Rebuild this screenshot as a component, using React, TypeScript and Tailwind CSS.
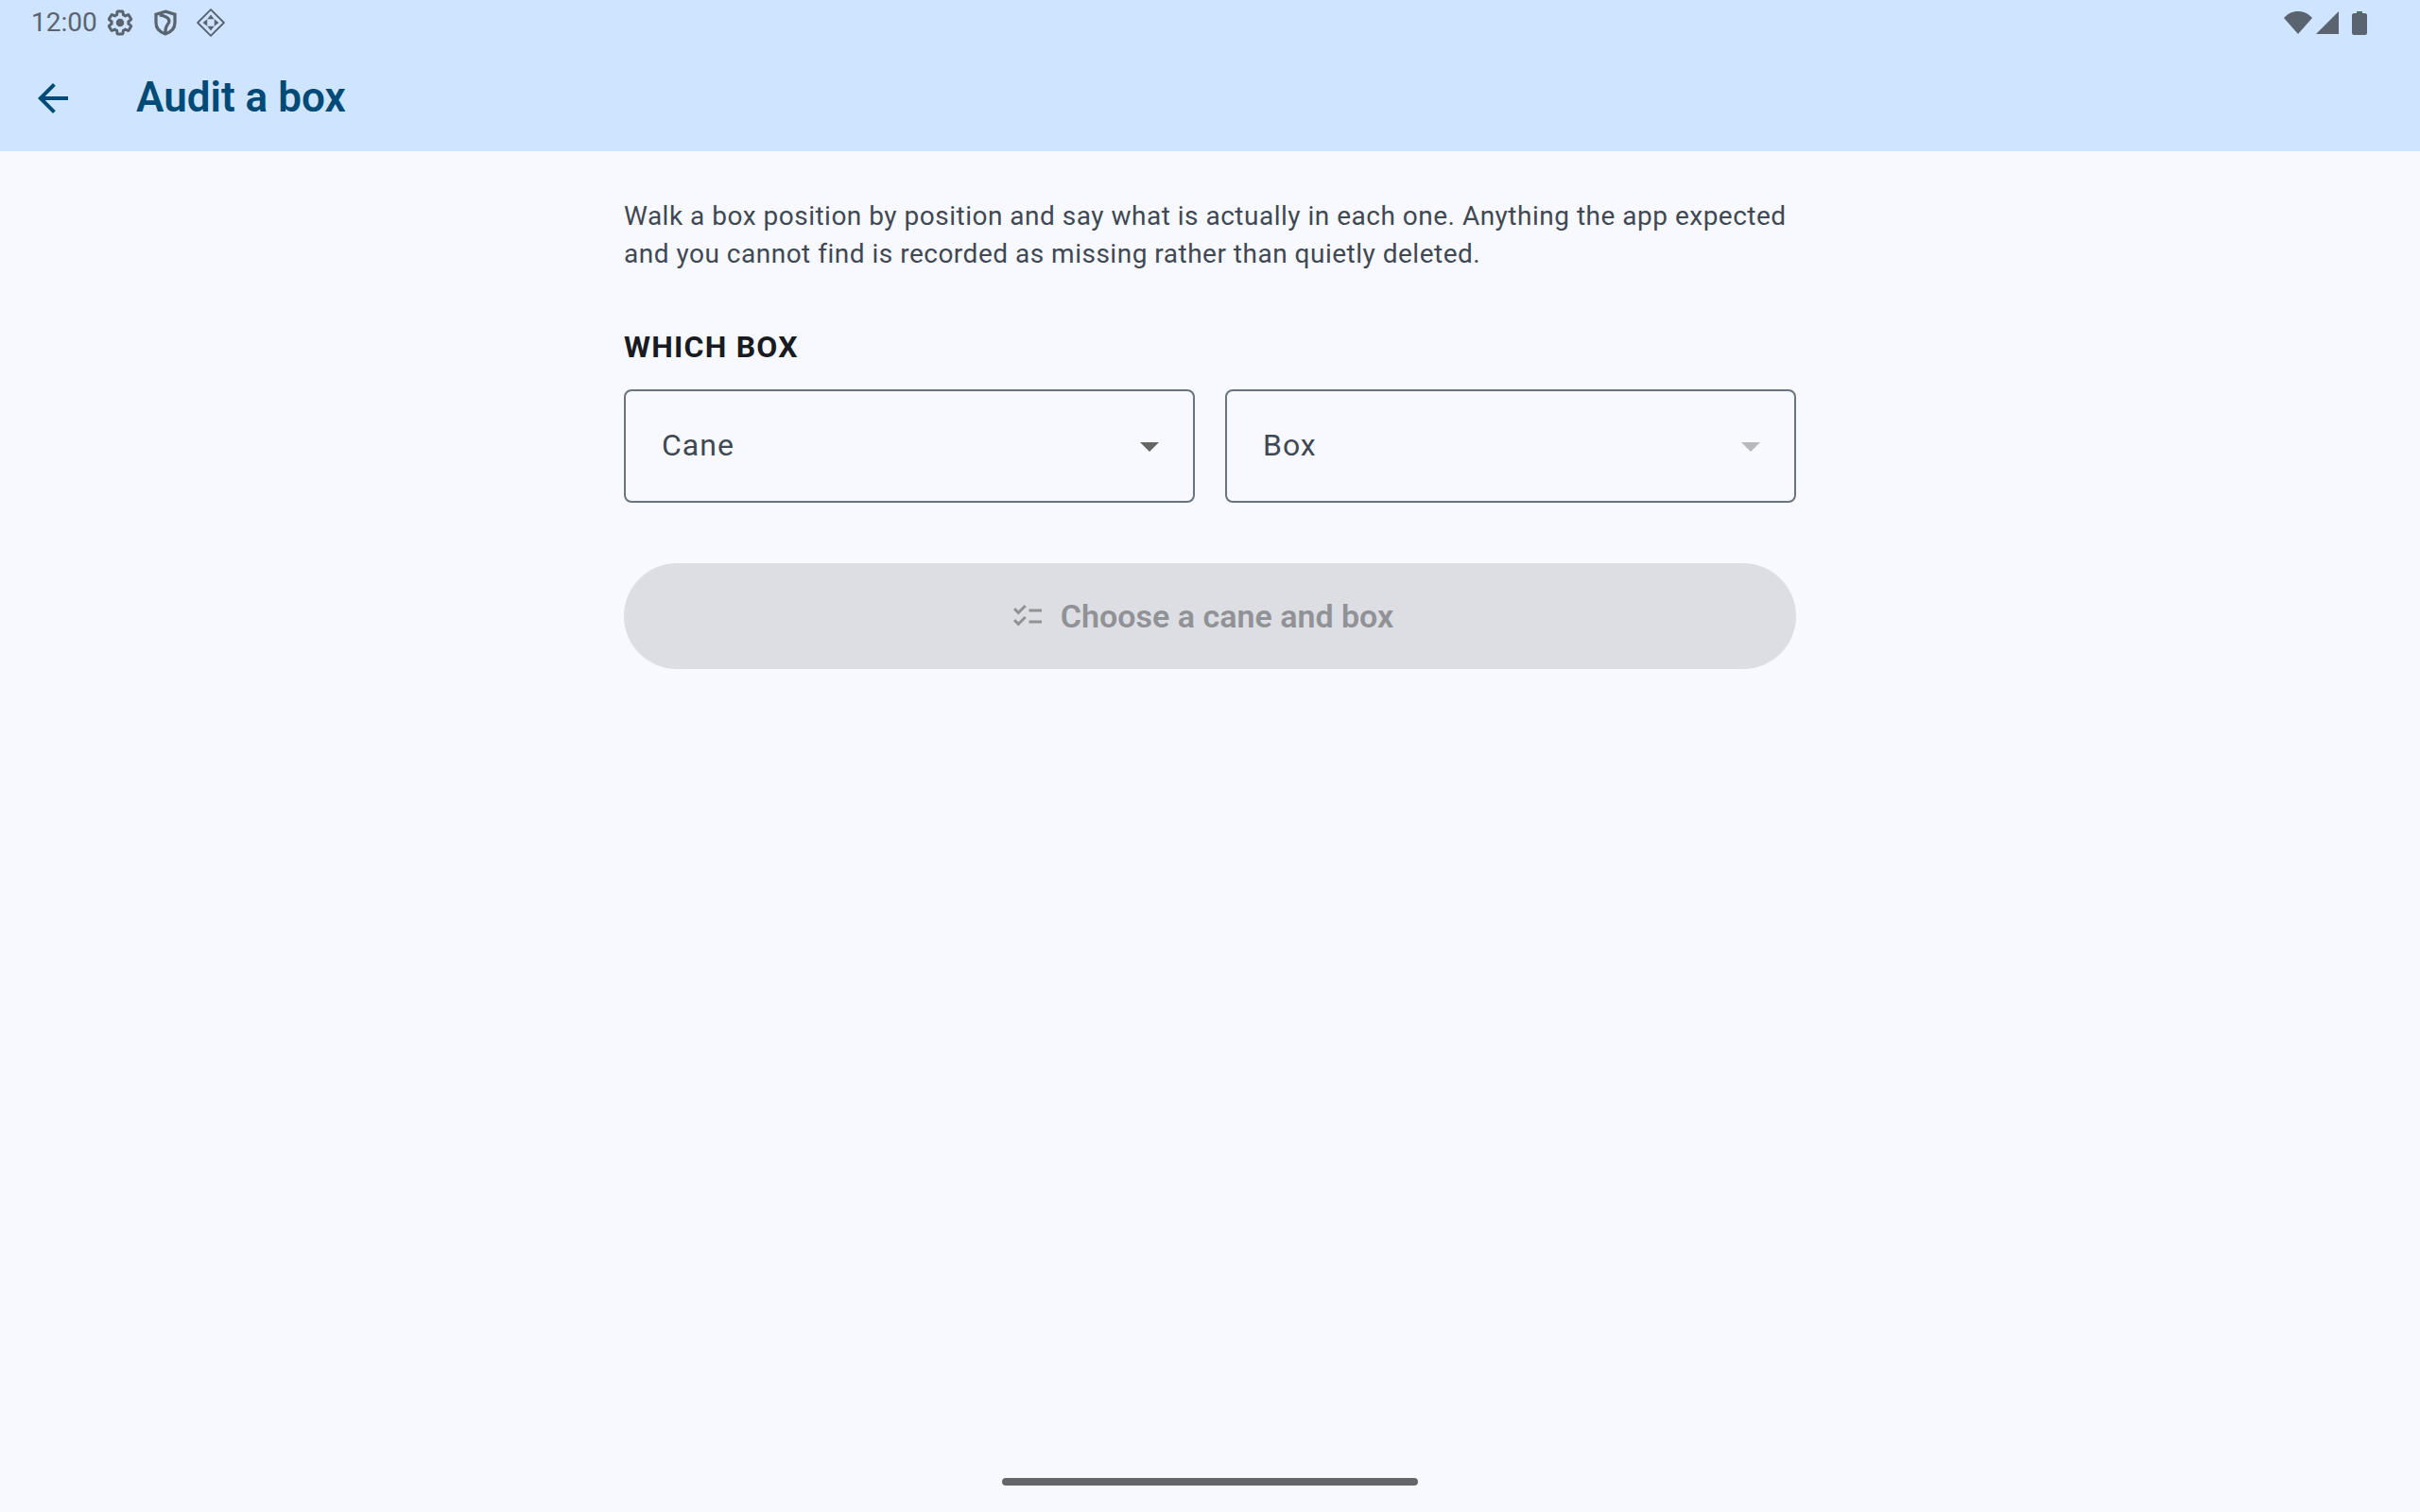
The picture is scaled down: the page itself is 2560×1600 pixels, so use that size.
import React from "react";

const GEAR =
  "M19.14 12.94c.04-.3.06-.61.06-.94 0-.32-.02-.64-.07-.94l2.03-1.58c.18-.14.23-.41.12-.61l-1.92-3.32c-.12-.22-.37-.29-.59-.22l-2.39.96c-.5-.38-1.03-.7-1.62-.94l-.36-2.54c-.04-.24-.24-.41-.48-.41h-3.84c-.24 0-.43.17-.47.41l-.36 2.54c-.59.24-1.13.57-1.62.94l-2.39-.96c-.22-.08-.47 0-.59.22L2.74 8.87c-.12.21-.08.47.12.61l2.03 1.58c-.05.3-.09.63-.09.94s.02.64.07.94l-2.03 1.58c-.18.14-.23.41-.12.61l1.92 3.32c.12.22.37.29.59.22l2.39-.96c.5.38 1.03.7 1.62.94l.36 2.54c.05.24.24.41.48.41h3.84c.24 0 .44-.17.47-.41l.36-2.54c.59-.24 1.13-.56 1.62-.94l2.39.96c.22.08.47 0 .59-.22l1.92-3.32c.12-.22.07-.47-.12-.61l-2.01-1.58z";

const StatusBar: React.FC = () => (
  <div className="h-[48px] flex items-center justify-between pl-[33px] pr-[56px] text-[#5a6470]">
    <div className="flex items-center">
      <span className="text-[28px] leading-[46px] w-[79px]">12:00</span>
      <svg className="w-[30px] h-[30px]" viewBox="0 0 24 24" fill="none" stroke="currentColor" strokeWidth="2.4">
        <path d={GEAR} />
        <circle cx="12" cy="12" r="3.4" fill="currentColor" stroke="none" />
      </svg>
      <svg className="w-[30px] h-[30px] ml-[18px]" viewBox="0 0 24 24" fill="none" stroke="currentColor" strokeWidth="2.6">
        <path d="M12 2.5 20 5v7c0 4.500-3.200 8-8 9.500-4.800-1.500-8-5-8-9.500V5z" />
        <path d="M7 5.500c4 .5 9 2.500 8 6-.8 2.500-3.500 3-3 9" />
      </svg>
      <svg className="w-[32px] h-[32px] ml-[17px]" viewBox="0 0 30 30" fill="none" stroke="currentColor" strokeWidth="1.800">
        <path d="M15 2 28 15 15 28 2 15z" strokeLinejoin="round" />
        <path d="M15 7l3.500 4.500h-7zM15 23l-3.500-4.500h7zM7 15l4.500-3.500v7zM23 15l-4.500 3.500v-7z" fill="currentColor" stroke="none" />
      </svg>
    </div>
    <div className="flex items-center">
      <svg className="w-[30px] h-[26px]" viewBox="0 0 30 26" fill="currentColor">
        <path d="M0 8C4 3.500 9 1 15 1s11 2.500 15 7L15 25z" />
      </svg>
      <svg className="w-[26px] h-[26px] ml-[3px]" viewBox="0 0 26 26" fill="currentColor">
        <path d="M25 1v24H1z" />
      </svg>
      <svg className="w-[16px] h-[26px] ml-[13px]" viewBox="0 0 16 26" fill="currentColor">
        <path d="M5 1h6v2h3c1 0 2 1 2 2v19c0 1-1 2-2 2H2c-1 0-2-1-2-2V5c0-1 1-2 2-2h3z" />
      </svg>
    </div>
  </div>
);

const Dropdown: React.FC<{ label: string; arrow: string }> = ({ label, arrow }) => (
  <div className="flex-1 h-[120px] border-2 border-[#6b7280] rounded-[8px] flex items-center justify-between pl-[38px] pr-[36px]">
    <span className="text-[32px] tracking-[1px] text-[#3f4853] mb-[2px]">{label}</span>
    <svg className="w-[20px] h-[10px] mt-[2px]" viewBox="0 0 20 10">
      <path d="M0 0h20L10 10z" fill={arrow} />
    </svg>
  </div>
);

export default function App() {
  return (
    <div
      className="relative h-[1600px] bg-[#f8f9ff] flex flex-col"
      style={{ fontFamily: "Roboto, sans-serif" }}
    >
      <header className="h-[160px] bg-[#cfe5ff]">
        <StatusBar />
        <div className="h-[112px] flex items-center pl-[32px]">
          <svg className="w-[48px] h-[48px]" viewBox="0 0 24 24" fill="#004a77">
            <path d="M20 11H7.830l5.590-5.590L12 4l-8 8 8 8 1.410-1.410L7.830 13H20v-2z" />
          </svg>
          <h1 className="ml-[64px] mb-[2px] text-[44px] font-semibold text-[#004a77]">Audit a box</h1>
        </div>
      </header>

      <main className="w-[1240px] mx-auto pt-[49px]">
        <p className="text-[28px] leading-[40px] tracking-[0.5px] text-[#3f4853]">
          Walk a box position by position and say what is actually in each one. Anything the app expected
          <br />
          and you cannot find is recorded as missing rather than quietly deleted.
        </p>
        <h2 className="mt-[58px] text-[32px] leading-[40px] font-bold tracking-[1.2px] text-[#181c22]">WHICH BOX</h2>
        <div className="mt-[25px] flex gap-[32px]">
          <Dropdown label="Cane" arrow="#666666" />
          <Dropdown label="Box" arrow="#b8b9bc" />
        </div>
        <div className="mt-[64px] h-[112px] rounded-full bg-[#dddee3] flex items-center justify-center pr-[17px] text-[#909296]">
          <svg className="w-[36px] h-[36px]" viewBox="0 0 24 24" fill="currentColor">
            <path d="M22 7h-9v2h9V7zm0 8h-9v2h9v-2zM5.540 11 2 7.460l1.410-1.410 2.120 2.120 4.240-4.240 1.410 1.410L5.540 11zm0 8L2 15.460l1.410-1.410 2.120 2.120 4.240-4.240 1.410 1.410L5.540 19z" />
          </svg>
          <span className="ml-[17px] text-[34px] font-semibold">Choose a cane and box</span>
        </div>
      </main>

      <div className="absolute bottom-[28px] left-[1060px] w-[440px] h-[8px] rounded-full bg-[#646568]" />
    </div>
  );
}
